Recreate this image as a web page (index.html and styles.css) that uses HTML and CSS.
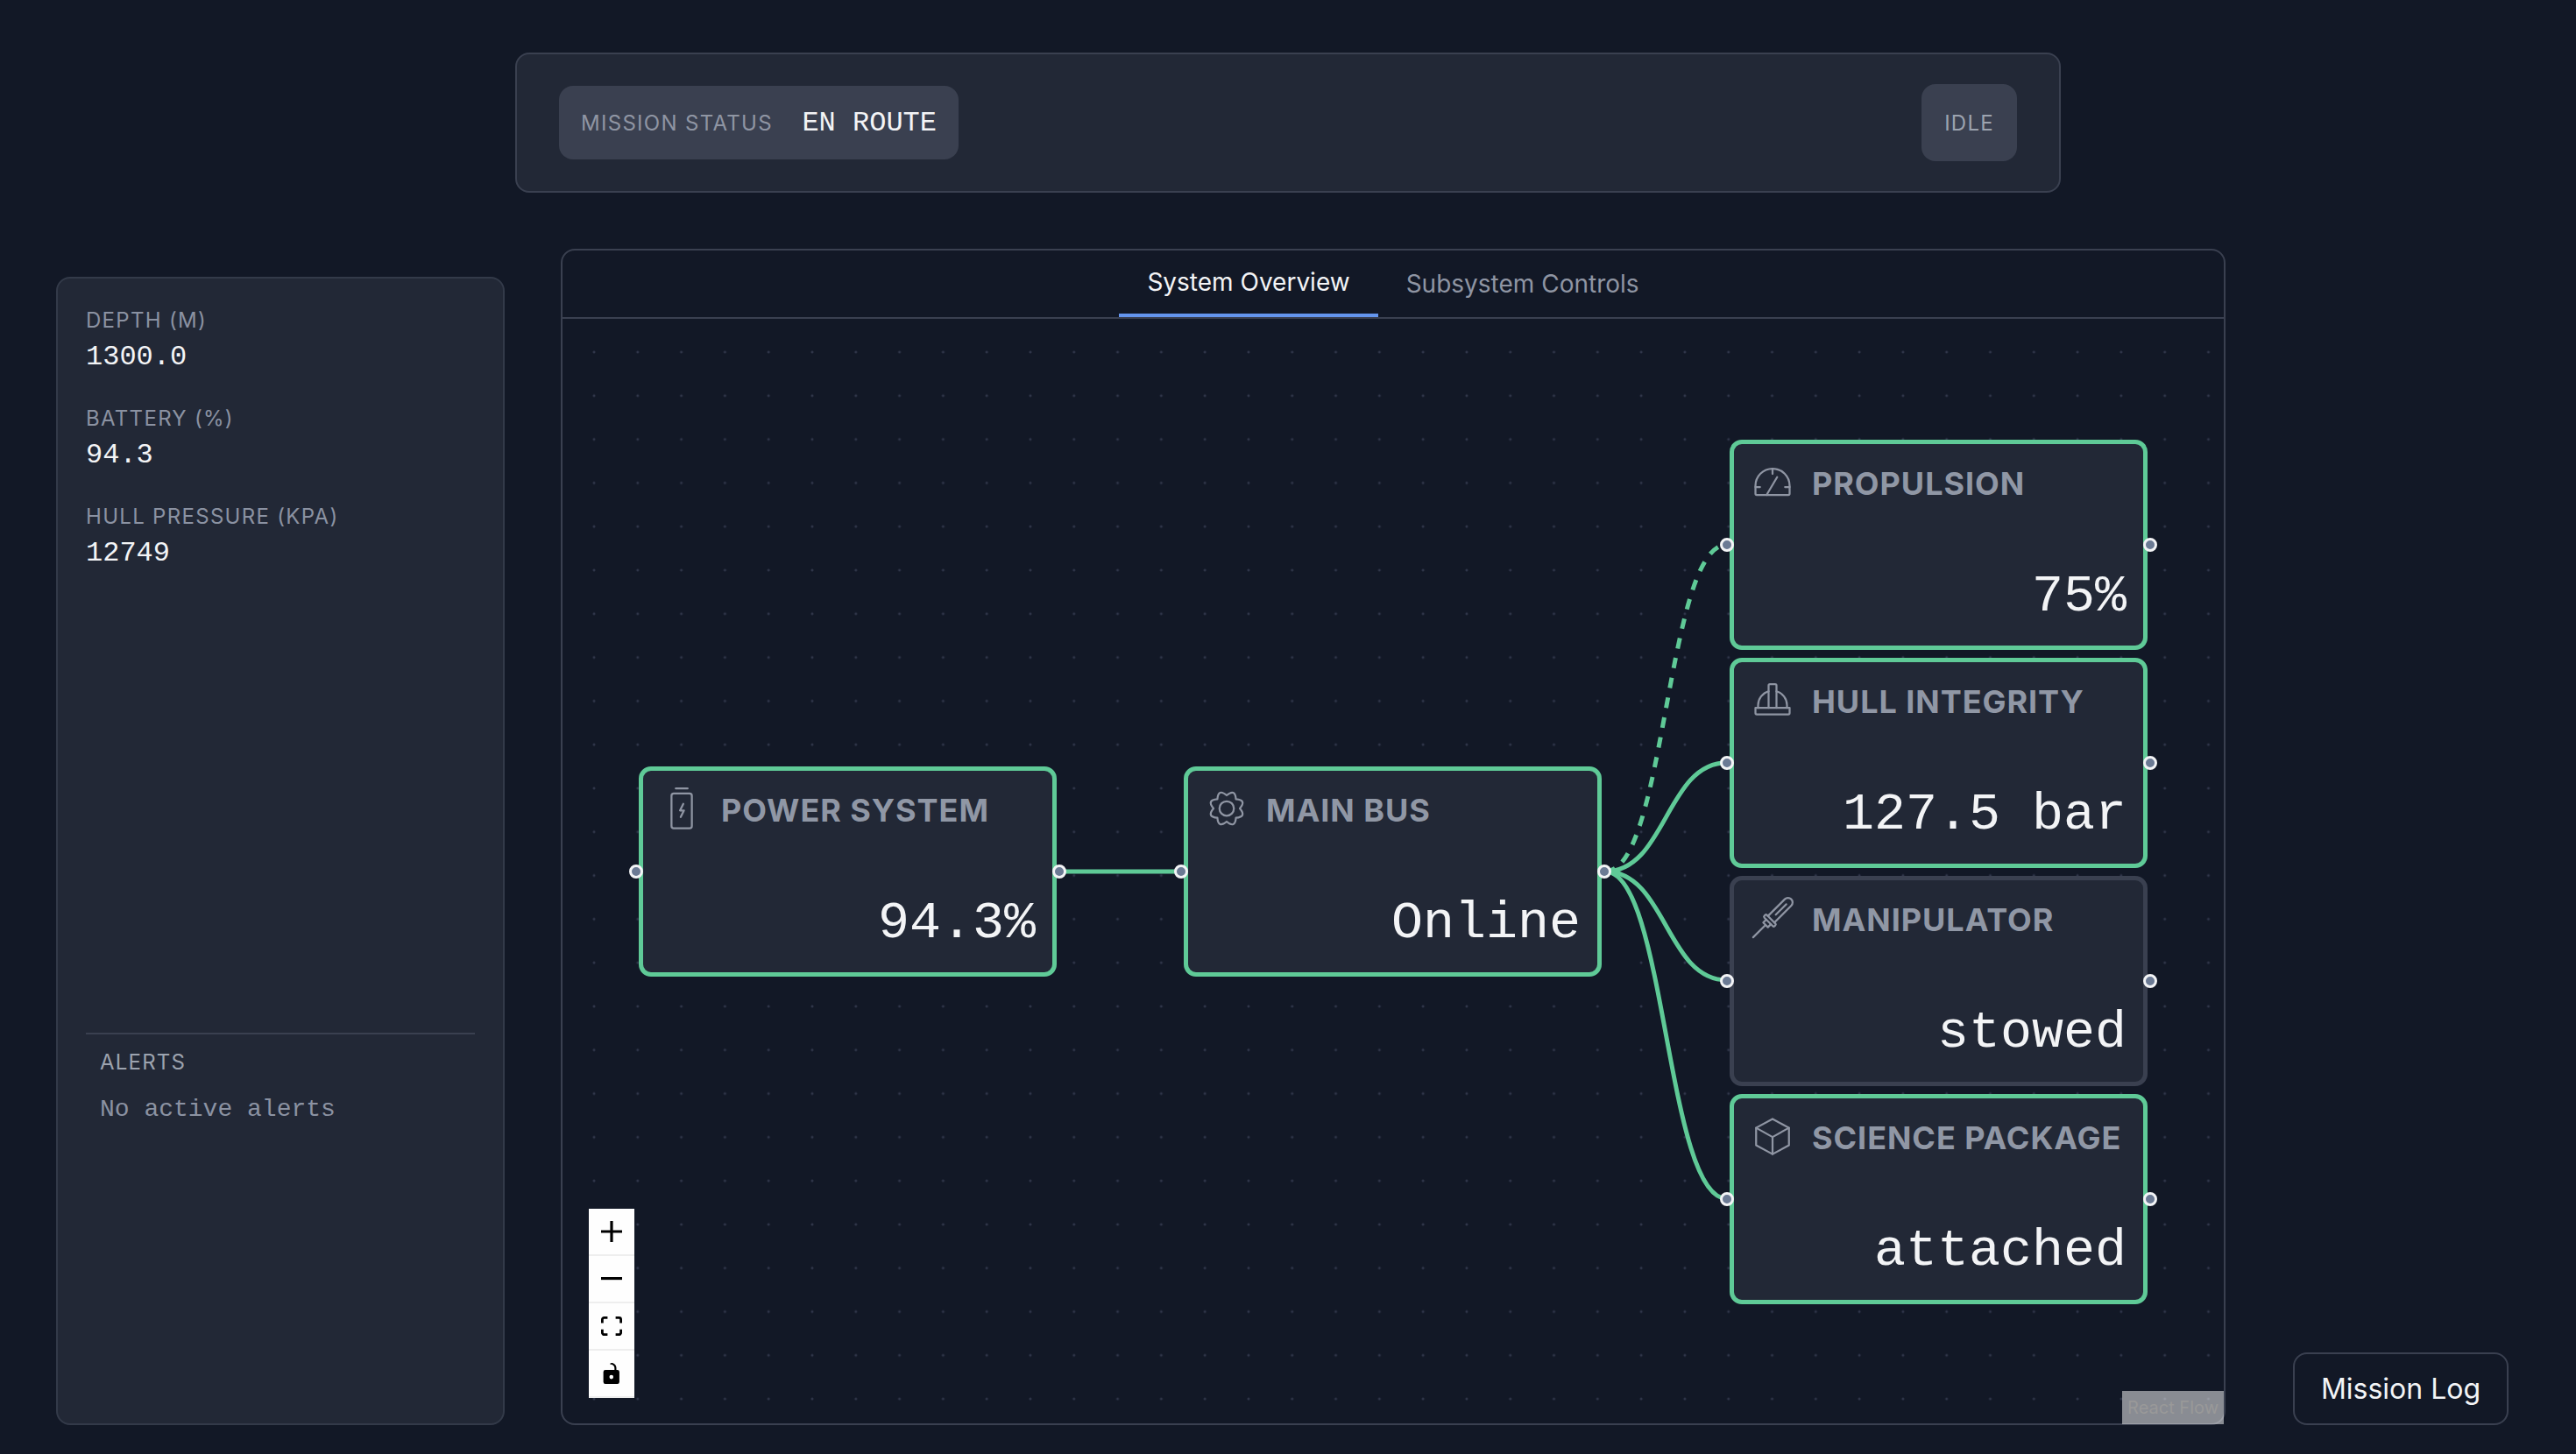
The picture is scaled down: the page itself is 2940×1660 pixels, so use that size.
FILE: index.html
```html
<!DOCTYPE html>
<html lang="en">
<head>
    <meta charset="UTF-8">
    <meta name="viewport" content="width=device-width, initial-scale=1.0">
    <title>Mission Console</title>
    <link rel="stylesheet" href="styles.css">
</head>

<body>
    <!-- Status bar -->
    <header class="status-bar">
        <div class="status-pill">
            <span class="status-label">MISSION STATUS</span>
            <span class="status-value">EN ROUTE</span>
        </div>
        <div class="idle-pill">IDLE</div>
    </header>

    <div class="workspace">
        <!-- Telemetry -->
        <aside class="sidebar">
            <div class="metric">
                <div class="metric-label">DEPTH (M)</div>
                <div class="metric-value">1300.0</div>
            </div>
            <div class="metric">
                <div class="metric-label">BATTERY (%)</div>
                <div class="metric-value">94.3</div>
            </div>
            <div class="metric">
                <div class="metric-label">HULL PRESSURE (KPA)</div>
                <div class="metric-value">12749</div>
            </div>

            <div class="alerts">
                <div class="alerts-title">ALERTS</div>
                <div class="alerts-empty">No active alerts</div>
            </div>
        </aside>

        <!-- Diagram -->
        <main class="panel">
            <nav class="tabs">
                <div class="tab tab-active">System Overview</div>
                <div class="tab">Subsystem Controls</div>
            </nav>

            <div class="canvas">
                <svg class="edges" width="1896" height="1261" viewBox="0 0 1896 1261">
                    <path class="edge" d="M567 631 L706 631"/>
                    <path class="edge edge-dashed" d="M1190 631 C1259.5 631 1259.5 257.7 1329 257.7"/>
                    <path class="edge" d="M1190 631 C1259.5 631 1259.5 506.7 1329 506.7"/>
                    <path class="edge" d="M1190 631 C1259.5 631 1259.5 755 1329 755"/>
                    <path class="edge" d="M1190 631 C1259.5 631 1259.5 1004.7 1329 1004.7"/>
                </svg>

                <div class="node node-power">
                    <span class="handle handle-left"></span>
                    <div class="node-head">
                        <svg class="node-icon" viewBox="0 0 256 256">
                            <path d="M92 6h72"/>
                            <rect x="66" y="36" width="124" height="212" rx="14"/>
                            <path d="M138 100l-20 40h24l-20 40"/>
                        </svg>
                        <span class="node-title">POWER SYSTEM</span>
                    </div>
                    <div class="node-value">94.3%</div>
                    <span class="handle handle-right"></span>
                </div>

                <div class="node node-bus">
                    <span class="handle handle-left"></span>
                    <div class="node-head">
                        <svg class="node-icon" viewBox="0 0 256 256">
                            <circle cx="128" cy="128" r="44"/>
                            <path transform="rotate(22.5 128 128)" d="M201.9 158.6Q222.8 222.8 158.6 201.9Q128 262 97.4 201.9Q33.2 222.8 54.1 158.6Q-6 128 54.1 97.4Q33.2 33.2 97.4 54.1Q128 -6 158.6 54.1Q222.8 33.2 201.9 97.4Q262 128 201.9 158.6Z"/>
                        </svg>
                        <span class="node-title">MAIN BUS</span>
                    </div>
                    <div class="node-value">Online</div>
                    <span class="handle handle-right"></span>
                </div>

                <div class="node node-propulsion">
                    <span class="handle handle-left"></span>
                    <div class="node-head">
                        <svg class="node-icon" viewBox="0 0 256 256">
                            <path d="M24 152a104 104 0 0 1 208 0v48a8 8 0 0 1-8 8H32a8 8 0 0 1-8-8Z"/>
                            <path d="M128 48v32M24 160h28M204 160h28M92 208l64-108"/>
                        </svg>
                        <span class="node-title">PROPULSION</span>
                    </div>
                    <div class="node-value">75%</div>
                    <span class="handle handle-right"></span>
                </div>

                <div class="node node-hull">
                    <span class="handle handle-left"></span>
                    <div class="node-head">
                        <svg class="node-icon" viewBox="0 0 256 256">
                            <path d="M24 176h208v32a8 8 0 0 1-8 8H32a8 8 0 0 1-8-8Z"/>
                            <path d="M40 176v-16a88 88 0 0 1 64-84M152 76a88 88 0 0 1 64 84v16"/>
                            <path d="M104 176V40a8 8 0 0 1 8-8h32a8 8 0 0 1 8 8v136"/>
                        </svg>
                        <span class="node-title">HULL INTEGRITY</span>
                    </div>
                    <div class="node-value">127.5 bar</div>
                    <span class="handle handle-right"></span>
                </div>

                <div class="node node-manipulator">
                    <span class="handle handle-left"></span>
                    <div class="node-head">
                        <svg class="node-icon" viewBox="0 0 256 256">
                            <g transform="rotate(45 128 128)">
                                <path d="M100 140V-5a28 28 0 0 1 56 0V140"/>
                                <path d="M128 10V100"/>
                                <rect x="84" y="140" width="88" height="22" rx="8"/>
                                <path d="M108 162v26h40v-26M128 188V295"/>
                            </g>
                        </svg>
                        <span class="node-title">MANIPULATOR</span>
                    </div>
                    <div class="node-value">stowed</div>
                    <span class="handle handle-right"></span>
                </div>

                <div class="node node-science">
                    <span class="handle handle-left"></span>
                    <div class="node-head">
                        <svg class="node-icon" viewBox="0 0 256 256">
                            <path d="M128 24l100 54v106l-100 54-100-54V78Z"/>
                            <path d="M28 78l100 56 100-56M128 134v104"/>
                        </svg>
                        <span class="node-title">SCIENCE PACKAGE</span>
                    </div>
                    <div class="node-value">attached</div>
                    <span class="handle handle-right"></span>
                </div>

                <!-- Zoom controls -->
                <div class="controls">
                    <button class="control-btn">
                        <svg viewBox="0 0 32 32"><path d="M32 18.133H18.133V32h-4.266V18.133H0v-4.266h13.867V0h4.266v13.867H32z"/></svg>
                    </button>
                    <button class="control-btn">
                        <svg viewBox="0 0 32 5"><path d="M0 0h32v4.2H0z"/></svg>
                    </button>
                    <button class="control-btn">
                        <svg viewBox="0 0 32 30"><path d="M3.692 4.63c0-.53.4-.938.939-.938h5.215V0H4.708C2.13 0 0 2.054 0 4.63v5.216h3.692V4.631zM27.354 0h-5.2v3.692h5.17c.53 0 .984.4.984.939v5.215H32V4.631A4.624 4.624 0 0027.354 0zm.954 24.83c0 .532-.4.94-.939.94h-5.215v3.768h5.215c2.577 0 4.631-2.13 4.631-4.707v-5.139h-3.692v5.139zm-23.677.94c-.531 0-.939-.4-.939-.94v-5.138H0v5.139c0 2.577 2.13 4.707 4.708 4.707h5.138V25.77H4.631z"/></svg>
                    </button>
                    <button class="control-btn">
                        <svg viewBox="0 0 25 32"><path d="M21.333 10.667H19.81V7.619C19.81 3.429 16.38 0 12.19 0c-4.114 1.828-1.37 2.133.305 2.438 1.676.305 4.42 2.59 4.42 5.181v3.048H3.047A3.056 3.056 0 000 13.714v15.238A3.056 3.056 0 003.048 32h18.285a3.056 3.056 0 003.048-3.048V13.714a3.056 3.056 0 00-3.048-3.047zM12.19 24.533a3.056 3.056 0 01-3.047-3.047 3.056 3.056 0 013.047-3.048 3.056 3.056 0 013.048 3.048 3.056 3.056 0 01-3.048 3.047z"/></svg>
                    </button>
                </div>

                <div class="attribution">React Flow</div>
            </div>
        </main>

        <button class="log-btn">Mission Log</button>
    </div>
</body>
</html>
```

FILE: styles.css
```css
/* Reset */
* {
    margin: 0;
    padding: 0;
    box-sizing: border-box;
}

body {
    font-family: 'Inter', 'Liberation Sans', sans-serif;
    background-color: #121826;
    color: #f3f4f6;
    width: 2940px;
    height: 1660px;
    overflow: hidden;
    padding-top: 60px;
}

/* Status bar */
.status-bar {
    width: 1764px;
    height: 160px;
    margin: 0 auto;
    padding: 0 48px;
    display: flex;
    justify-content: space-between;
    align-items: center;
    background-color: #222836;
    border: 2px solid #3a4050;
    border-radius: 16px;
}

.status-pill {
    height: 84px;
    width: 456px;
    padding: 0 25px;
    display: flex;
    align-items: center;
    justify-content: space-between;
    background-color: #3a4050;
    border-radius: 16px;
}

.status-label {
    font-size: 24px;
    letter-spacing: 1.3px;
    color: #8f95a3;
    white-space: nowrap;
}

.status-value {
    font-family: 'Liberation Mono', monospace;
    font-size: 32px;
    white-space: nowrap;
}

.idle-pill {
    width: 109px;
    height: 88px;
    display: flex;
    align-items: center;
    justify-content: center;
    font-size: 24px;
    letter-spacing: 1.2px;
    color: #9ca3af;
    background-color: #3a4050;
    border-radius: 16px;
}

/* Main area */
.workspace {
    display: flex;
    margin-top: 64px;
    height: 1343px;
    padding-left: 64px;
}

.sidebar {
    width: 512px;
    margin-top: 32px;
    padding: 32px 32px 0;
    display: flex;
    flex-direction: column;
    background-color: #222836;
    border: 2px solid #333a49;
    border-radius: 16px;
}

.metric {
    margin-bottom: 34px;
}

.metric-label {
    font-size: 24px;
    line-height: 32px;
    letter-spacing: 1.3px;
    color: #8b92a2;
}

.metric-value {
    margin-top: 6px;
    font-family: 'Liberation Mono', monospace;
    font-size: 32px;
    line-height: 40px;
}

.alerts {
    margin-top: auto;
    height: 446px;
    padding: 16px 16px 0;
    border-top: 2px solid #3a4050;
}

.alerts-title {
    font-size: 24px;
    line-height: 32px;
    letter-spacing: 1.2px;
    color: #9ca3af;
}

.alerts-empty {
    margin-top: 20px;
    font-family: 'Liberation Mono', monospace;
    font-size: 28px;
    line-height: 36px;
    color: #8b92a2;
}

/* Panel and tabs */
.panel {
    width: 1900px;
    margin-left: 64px;
    display: flex;
    flex-direction: column;
    border: 2px solid #3a4050;
    border-radius: 16px;
}

.tabs {
    height: 78px;
    display: flex;
    justify-content: center;
    align-items: flex-end;
    border-bottom: 2px solid #3a4050;
}

.tab {
    padding: 0 32px 21px;
    font-size: 28px;
    line-height: 34px;
    color: #8f95a3;
}

.tab-active {
    padding-bottom: 19px;
    color: #f3f4f6;
    border-bottom: 4px solid #6495ed;
}

/* Canvas */
.canvas {
    position: relative;
    flex: 1;
    background-image: radial-gradient(circle, #30364a 1.25px, transparent 1.75px);
    background-size: 49.8px 49.8px;
    background-position: 11.1px 13.1px;
}

.edges {
    position: absolute;
    left: 0;
    top: 0;
}

.edge {
    fill: none;
    stroke: #5fca97;
    stroke-width: 5;
}

.edge-dashed {
    stroke-dasharray: 12 11;
}

.node {
    position: absolute;
    width: 477px;
    height: 240px;
    padding: 19px 19px 19px 20px;
    background-color: #222836;
    border: 5px solid #5fca97;
    border-radius: 14px;
}

.node-power { left: 87px; top: 511px; }
.node-bus { left: 709px; top: 511px; }
.node-propulsion { left: 1332px; top: 138px; }
.node-hull { left: 1332px; top: 387px; }
.node-science { left: 1332px; top: 885px; }
.node-manipulator {
    left: 1332px;
    top: 636px;
    border-color: #3a4050;
}

.node-head {
    display: flex;
    align-items: center;
    gap: 21px;
}

.node-icon {
    width: 48px;
    height: 48px;
    flex-shrink: 0;
    overflow: visible;
    fill: none;
    stroke: #8f95a3;
    stroke-width: 12;
    stroke-linejoin: round;
    stroke-linecap: round;
}

.node-title {
    position: relative;
    top: 2px;
    font-size: 36px;
    font-weight: 700;
    letter-spacing: 0.95px;
    color: #9097a5;
    white-space: nowrap;
}

.node-value {
    margin-top: 72px;
    text-align: right;
    font-family: 'Liberation Mono', monospace;
    font-size: 60px;
    line-height: 70px;
    color: #f3f4f6;
    white-space: nowrap;
}

.handle {
    position: absolute;
    top: 107px;
    width: 16px;
    height: 16px;
    background-color: #6b7a94;
    border: 3px solid #f3f4f6;
    border-radius: 50%;
}

.handle-left { left: -16px; }
.handle-right { right: -16px; }

/* Zoom controls */
.controls {
    position: absolute;
    left: 30px;
    bottom: 29px;
    width: 52px;
    display: flex;
    flex-direction: column;
}

.control-btn {
    height: 54px;
    display: flex;
    align-items: center;
    justify-content: center;
    background-color: #fefefe;
    border: none;
    border-bottom: 2px solid #eee;
}

.control-btn svg {
    width: 24px;
    max-height: 24px;
    fill: #000;
}

.attribution {
    position: absolute;
    right: 0;
    bottom: -1px;
    height: 38px;
    padding: 0 6px;
    display: flex;
    align-items: center;
    font-size: 20px;
    color: #999;
    background-color: rgba(255, 255, 255, 0.5);
}

/* Log button */
.log-btn {
    align-self: flex-end;
    width: 246px;
    height: 83px;
    margin-left: 77px;
    font-family: inherit;
    font-size: 32px;
    color: #f3f4f6;
    background-color: transparent;
    border: 2px solid #3a4050;
    border-radius: 16px;
}
```
